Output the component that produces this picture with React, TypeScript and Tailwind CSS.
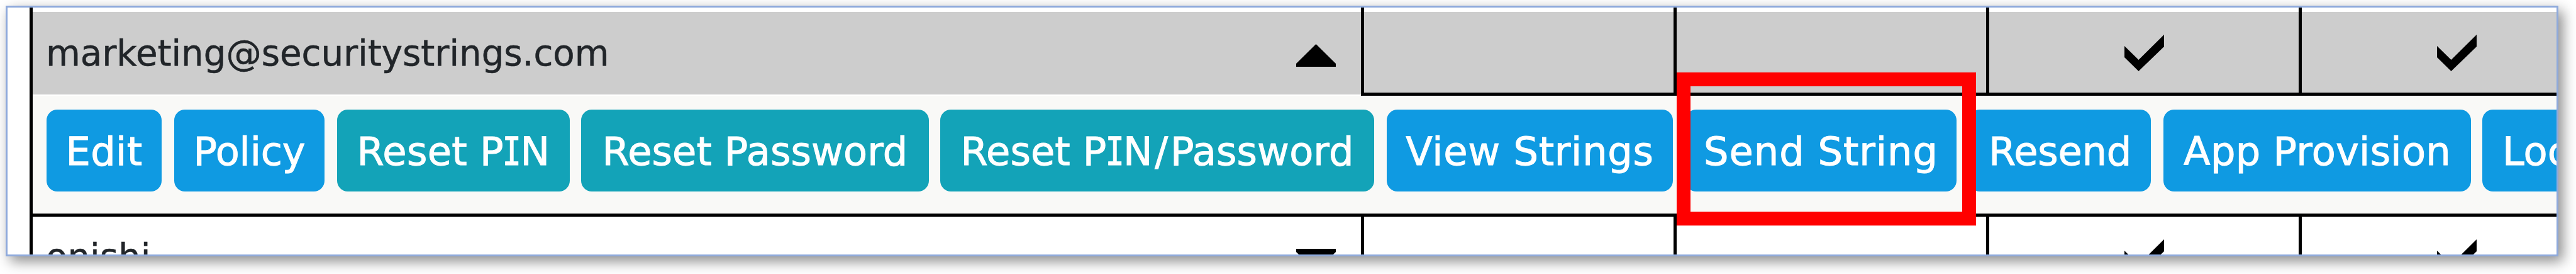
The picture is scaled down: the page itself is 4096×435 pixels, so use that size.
import React from "react";

type Action = {
  label: string;
  className: string;
};

const actions: Action[] = [
  { label: "Edit", className: "w-[183px] bg-[#0f9ae2] tracking-[0.4px]" },
  { label: "Policy", className: "ml-[20px] w-[239px] bg-[#0f9ae2] tracking-[-0.2px]" },
  { label: "Reset PIN", className: "ml-[20px] w-[370px] bg-[#13a3b8] tracking-[0.3px]" },
  { label: "Reset Password", className: "ml-[18px] w-[553px] bg-[#13a3b8] tracking-[0.1px]" },
  { label: "Reset PIN/Password", className: "ml-[18px] w-[690px] bg-[#13a3b8] tracking-[0.12px]" },
  { label: "View Strings", className: "ml-[20px] w-[455px] bg-[#0f9ae2] tracking-[0.73px]" },
  { label: "Send String", className: "ml-[20px] w-[431px] bg-[#0f9ae2] tracking-[0.95px]" },
  { label: "Resend", className: "ml-[20px] w-[289px] bg-[#0f9ae2] tracking-[-0.25px]" },
  { label: "App Provision", className: "ml-[20px] w-[489px] bg-[#0f9ae2] tracking-[0.26px]" },
  { label: "Lock", className: "ml-[18px] w-[206px] bg-[#0f9ae2]" },
];

const Label = ({ text }: { text: string }) => (
  <span className="whitespace-pre">
    {text.split(/([I/])/).map((part, i) => {
      if (part === "I") {
        // capital I with serifs
        return (
          <span
            key={i}
            className="-mx-[0.09em] inline-block scale-x-80 font-['DejaVu_Sans_Mono',monospace]"
          >
            I
          </span>
        );
      }
      if (part === "/") {
        return (
          <span key={i} className="mx-[0.058em]">
            /
          </span>
        );
      }
      return part;
    })}
  </span>
);

const Check = () => (
  <svg width="63" height="60" viewBox="0 0 63 60" className="block shrink-0">
    <path d="M0 19 L22.5 41 L63 1 V20 L22.5 59 L0 37 Z" fill="#000" />
  </svg>
);

const Arrow = ({ down }: { down?: boolean }) => (
  <svg
    width="63"
    height="36"
    viewBox="0 0 63 36"
    className={down ? "block rotate-180" : "block"}
  >
    <path d="M31.5 0 L63 31 V36 H0 V31 Z" fill="#000" />
  </svg>
);

const App = () => {
  return (
    <div className="h-[435px] w-[4096px] overflow-hidden bg-white pl-[9px] pt-[9px] font-['DejaVu_Sans',sans-serif]">
      <div className="relative h-[398px] w-[4059px] border-[3px] border-[#8faadc] bg-white shadow-[7px_8px_20px_0px_rgba(0,0,0,0.45)]">
        <div className="flex h-full overflow-hidden pl-[35px]">
          <div className="flex w-[4018px] shrink-0 flex-col border-l-[5px] border-black">
            <div className="flex h-[140px] shrink-0 text-[56.3px] leading-[66px] text-[#212529] [-webkit-text-stroke:0.5px_#212529]">
              <div className="flex h-[138px] w-[2112px] shrink-0 flex-col pt-[7px]">
                <div className="flex grow justify-between bg-[#cdcdcd] pl-[21px] pr-[40px] pt-[33px]">
                  <span className="tracking-[-0.05px]">marketing@securitystrings.com</span>
                  <div className="pt-[18px]">
                    <Arrow />
                  </div>
                </div>
              </div>
              {[false, false, true, true].map((checked, i) => (
                <div
                  key={i}
                  className="flex w-[497px] shrink-0 flex-col border-b-[5px] border-l-[5px] border-black pt-[7px]"
                >
                  <div className="flex grow justify-center bg-[#cdcdcd] pt-[35px]">
                    {checked && <Check />}
                  </div>
                </div>
              ))}
            </div>

            <div className="flex h-[192px] shrink-0 border-b-[5px] border-black bg-[#f9f9f7] pl-[22px] pt-[22px]">
              {actions.map((action) => (
                <div
                  key={action.label}
                  className={`flex h-[130px] shrink-0 justify-center rounded-[17px] pt-[31px] text-[62.25px] leading-[72px] text-white [-webkit-text-stroke:1px_#fff] ${action.className}`}
                >
                  <Label text={action.label} />
                </div>
              ))}
            </div>

            <div className="flex h-[100px] shrink-0 text-[56.3px] leading-[66px] text-[#212529] [-webkit-text-stroke:0.5px_#212529]">
              <div className="flex w-[2112px] shrink-0 justify-between pl-[21px] pr-[40px] pt-[31px]">
                <span>onishi</span>
                <div className="pt-[20px]">
                  <Arrow down />
                </div>
              </div>
              {[false, false, true, true].map((checked, i) => (
                <div
                  key={i}
                  className="flex w-[497px] shrink-0 justify-center border-l-[5px] border-black pt-[35px]"
                >
                  {checked && <Check />}
                </div>
              ))}
            </div>
          </div>
        </div>
        {/* highlight around Send String */}
        <div className="absolute left-[2654px] top-[103px] h-[243px] w-[476px] border-[22px] border-[#ff0000]" />
      </div>
    </div>
  );
};

export default App;
